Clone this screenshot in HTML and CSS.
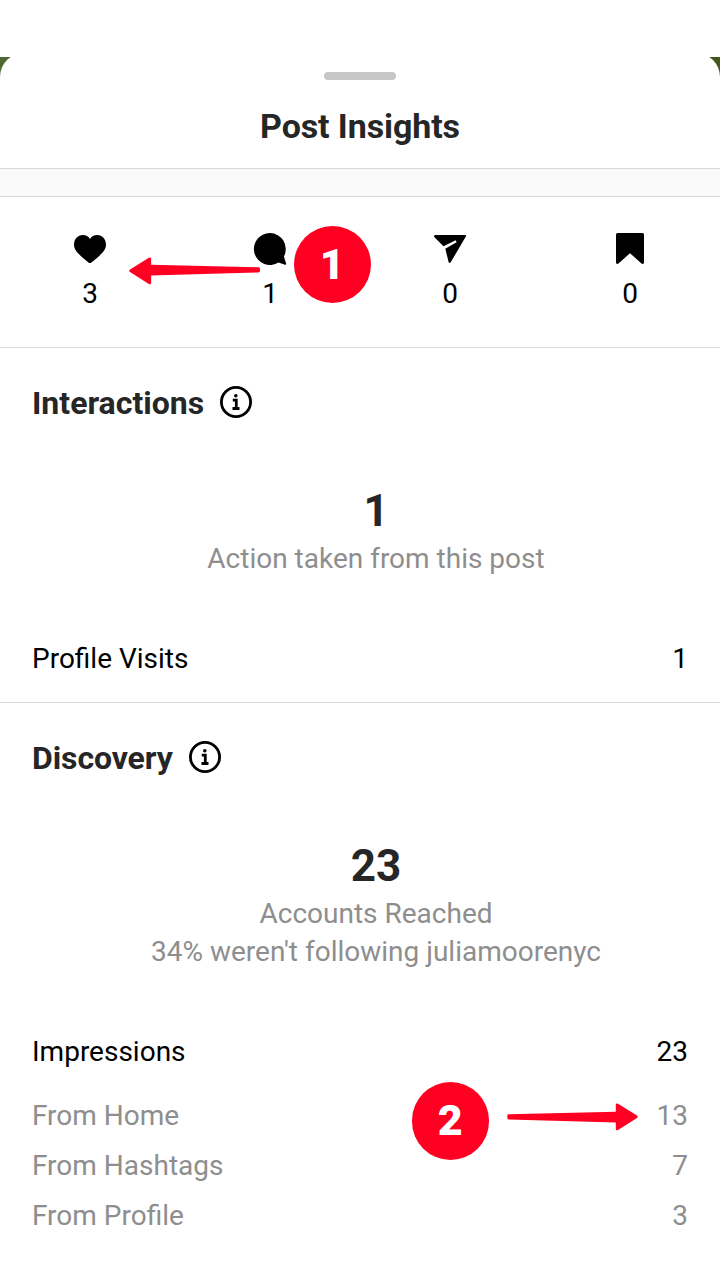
FILE: index.html
```
<!DOCTYPE html>
<html lang="en">
<head>
    <meta charset="UTF-8">
    <meta name="viewport" content="width=device-width, initial-scale=1.0">
    <title>Post Insights</title>
    <link rel="stylesheet" href="styles.css">
</head>
<body>
    <div class="backdrop">
        <div class="sheet">
            <div class="header">
                <div class="handle"></div>
                <h1 class="title">Post Insights</h1>
            </div>
            <div class="band"></div>

            <div class="stats">
                <div class="stat">
                    <svg class="stat-icon" width="36" height="36" viewBox="0 0 36 36">
                        <path d="M18 32 C16.8 32 14.5 29.8 10.5 26.4 C5.5 22 2 19 2 13.6 C2 8.3 5.7 4 10.7 4 C14 4 16.5 5.5 18 8 C19.5 5.5 22 4 25.3 4 C30.3 4 34 8.3 34 13.6 C34 19 30.5 22 25.5 26.4 C21.5 29.8 19.2 32 18 32 Z"/>
                    </svg>
                    <span>3</span>
                </div>
                <div class="stat">
                    <svg class="stat-icon" width="36" height="36" viewBox="0 0 36 36">
                        <path d="M18 2 A16 16 0 1 0 26.5 31.5 L33 33.8 Q34.5 34 34.1 32.5 L31.9 25.5 A16 16 0 0 0 18 2 Z"/>
                    </svg>
                    <span>1</span>
                </div>
                <div class="stat">
                    <svg class="stat-icon" width="36" height="36" viewBox="0 0 36 36">
                        <path d="M3.2 4 H33 Q34.6 4.2 33.7 5.8 L18.7 31.3 Q17.3 32.7 16.6 31 L13.3 17.8 L24.6 11.3 L23.7 9.3 L11.5 15.3 L2.5 6.3 Q1.3 4.6 3.2 4 Z"/>
                    </svg>
                    <span>0</span>
                </div>
                <div class="stat">
                    <svg class="stat-icon" width="36" height="36" viewBox="0 0 36 36">
                        <path d="M5.5 2 H30.5 Q32 2 32 3.5 V31.5 Q31.5 33.8 29.5 32.6 L18 22.2 L6.5 32.6 Q4.5 33.8 4 31.5 V3.5 Q4 2 5.5 2 Z"/>
                    </svg>
                    <span>0</span>
                </div>
            </div>

            <div class="section interactions">
                <div class="section-head">
                    <h2>Interactions</h2>
                    <svg class="info" width="32" height="32" viewBox="0 0 32 32">
                        <circle cx="16" cy="16" r="14.6" fill="none" stroke="#000" stroke-width="2.8"/>
                        <circle cx="15.8" cy="9.7" r="1.8"/>
                        <path d="M12.8 14.2 H16.3 V22.5 M12.5 22.5 H19.5" fill="none" stroke="#000" stroke-width="2.8"/>
                    </svg>
                </div>
                <div class="summary">
                    <div class="total">1</div>
                    <div>Action taken from this post</div>
                </div>
                <div class="row"><span>Profile Visits</span><span>1</span></div>
            </div>

            <div class="section discovery">
                <div class="section-head">
                    <h2>Discovery</h2>
                    <svg class="info" width="32" height="32" viewBox="0 0 32 32">
                        <circle cx="16" cy="16" r="14.6" fill="none" stroke="#000" stroke-width="2.8"/>
                        <circle cx="15.8" cy="9.7" r="1.8"/>
                        <path d="M12.8 14.2 H16.3 V22.5 M12.5 22.5 H19.5" fill="none" stroke="#000" stroke-width="2.8"/>
                    </svg>
                </div>
                <div class="summary">
                    <div class="total">23</div>
                    <div>Accounts Reached</div>
                    <div>34% weren't following juliamoorenyc</div>
                </div>
                <div class="row"><span>Impressions</span><span>23</span></div>
                <div class="breakdown">
                    <div class="row"><span>From Home</span><span>13</span></div>
                    <div class="row"><span>From Hashtags</span><span>7</span></div>
                    <div class="row"><span>From Profile</span><span>3</span></div>
                </div>
            </div>
        </div>
    </div>

    <!-- callouts on top of the sheet -->
    <div class="callout callout-one">1</div>
    <svg class="arrow arrow-one" width="131" height="28" viewBox="0 0 132 28" preserveAspectRatio="none">
        <path d="M1 12.5 L20 0.7 Q22 0 22.3 1.5 V7.8 L130.5 10.2 Q132 10.3 132 11.5 V14 Q132 15.3 130.5 15.4 L22.3 18.4 V26 Q22 28 20 27 L1 15 Q-0.5 13.7 1 12.5 Z"/>
    </svg>
    <div class="callout callout-two">2</div>
    <svg class="arrow arrow-two" width="131" height="28" viewBox="0 0 131 28">
        <path d="M130 12.5 L111 0.7 Q109 0 108.8 1.5 V8.7 L1.5 11.2 Q0.3 11.3 0.3 12.5 V15 Q0.3 16.3 1.5 16.4 L108.8 19.4 V26 Q109 28 111 27 L130 15 Q131.3 13.7 130 12.5 Z"/>
    </svg>
</body>
</html>
```
FILE: styles.css
```
* {
    box-sizing: border-box;
}
body {
    position: relative;
    margin: 0;
    padding-top: 57px;
    height: 1280px;
    overflow: hidden;
    background-color: #ffffff;
    font-family: Roboto, sans-serif;
    font-size: 28px;
    line-height: 38px;
    color: #000000;
}
h1, h2 {
    margin: 0;
    color: #262626;
}
.backdrop {
    height: 1223px;
    overflow: hidden;
    background: linear-gradient(90deg, #4e6834, #46551c);
}
.sheet {
    margin-top: -4px;
    height: 1227px;
    border-radius: 24px 24px 0 0;
    background-color: #ffffff;
}
.header {
    display: flex;
    flex-direction: column;
    align-items: center;
    height: 115px;
    padding-top: 19px;
}
.handle {
    width: 72px;
    height: 8px;
    border-radius: 4px;
    background-color: #c7c7c7;
}
.title {
    margin-top: 26px;
    font-size: 34px;
    line-height: 40px;
    letter-spacing: -0.1px;
}
.band {
    height: 29px;
    border-top: 1px solid #d8d8d8;
    border-bottom: 1px solid #d8d8d8;
    background-color: #fafafa;
}
.stats {
    display: flex;
    height: 151px;
    padding-top: 34px;
    border-bottom: 1px solid #dbdbdb;
}
.stat {
    flex: 1;
    display: flex;
    flex-direction: column;
    align-items: center;
    gap: 8px;
}
.section {
    padding: 35px 0 0 32px;
}
.interactions {
    height: 355px;
    border-bottom: 1px solid #dbdbdb;
}
.section-head {
    display: flex;
    align-items: center;
    gap: 16px;
    height: 40px;
}
.section-head h2 {
    font-size: 32px;
    line-height: 40px;
}
.discovery h2 {
    letter-spacing: -0.1px;
}
.info {
    margin-top: -2px;
}
.summary {
    margin-top: 62px;
    text-align: center;
    color: #8e8e8e;
}
.total {
    height: 55px;
    line-height: 52px;
    font-size: 44px;
    font-weight: bold;
    color: #262626;
}
.row {
    display: flex;
    justify-content: space-between;
    margin: 62px 32px 0 0;
}
.breakdown {
    display: flex;
    flex-direction: column;
    gap: 12px;
    margin-top: 26px;
    color: #8e8e8e;
}
.breakdown .row {
    margin-top: 0;
}
.callout {
    position: absolute;
    width: 77.5px;
    height: 77.5px;
    border-radius: 50%;
    background-color: #ff0022;
    color: #ffffff;
    font-size: 43px;
    font-weight: 900;
    line-height: 77px;
    text-align: center;
}
.callout-one {
    left: 293.5px;
    top: 225.5px;
}
.callout-two {
    left: 411.5px;
    top: 1082px;
}
.arrow {
    position: absolute;
    fill: #ff0022;
}
.arrow-one {
    left: 129px;
    top: 257px;
}
.arrow-two {
    left: 507px;
    top: 1102.500px;
}
```
